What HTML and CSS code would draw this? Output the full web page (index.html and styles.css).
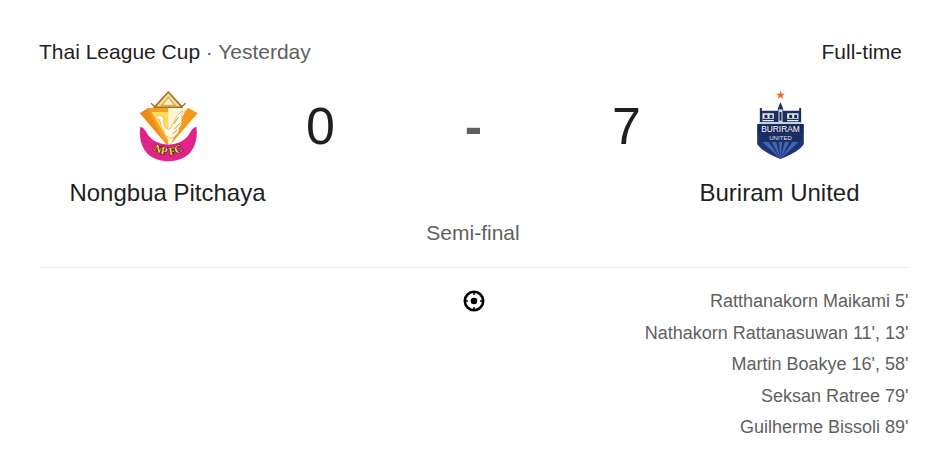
FILE: index.html
```html
<!DOCTYPE html>
<html lang="en">
<head>
<meta charset="utf-8">
<title>Nongbua Pitchaya vs Buriram United</title>
<link rel="stylesheet" href="styles.css">
</head>
<body>
<main class="card">
  <header class="top">
    <div class="league"><span class="league-name">Thai League Cup</span><span class="sep">·</span><span class="when">Yesterday</span></div>
    <div class="status">Full-time</div>
  </header>
  <section class="match">
    <div class="team">
      <svg class="crest" viewBox="0 6 198 216" aria-hidden="true">
        <defs><path id="np-arc" d="M40 176 Q100 226 160 176"/></defs>
        <path d="M100 12 L58 58 L142 58 Z" fill="#f8dfa0" stroke="#a5701f" stroke-width="5" stroke-linejoin="round"/>
        <path d="M100 28 L80 52 L120 52 Z" fill="#fff4d0" stroke="#e2a63c" stroke-width="4"/>
        <path d="M48 46 L62 58 M152 46 L138 58" stroke="#a5701f" stroke-width="4"/>
        <path d="M40 60 L100 60 L100 176 L15 76 Z" fill="#f6a01f"/>
        <path d="M100 60 L160 60 L188 76 L100 176 Z" fill="#fff6da"/>
        <path d="M160 60 L188 76 L108 168 L150 70 Z" fill="#f59a1c"/>
        <path d="M40 60 L15 76 L82 154 L44 74 Z" fill="#ee8a1a"/>
        <path d="M50 72 L100 72 L100 160 Z" fill="#ffdc5a"/>
        <path d="M62 90 C70 76 88 82 86 96 C84 112 92 124 104 124 C114 108 122 84 142 68 C138 92 146 104 132 122 C136 130 122 146 112 150 C100 152 92 146 86 128 C76 116 78 100 72 94 C70 92 66 94 62 90 Z" fill="#fffbe8" stroke="#c88a2a" stroke-width="1.500"/>
        <path d="M116 108 L130 88 M118 124 L134 106 M112 138 L126 126" stroke="#d98a1e" stroke-width="3"/>
        <path d="M16 116 C24 118 30 124 36 136 C46 156 74 170 100 170 C128 170 154 156 164 136 C170 124 176 118 184 116 C190 156 176 192 148 208 C120 224 80 224 52 208 C24 192 10 156 16 116 Z" fill="#e2218a"/>
        <text class="crest-np"><textPath href="#np-arc" startOffset="50%" text-anchor="middle">NP FC</textPath></text>
      </svg>
      <div class="team-name">Nongbua Pitchaya</div>
    </div>
    <div class="center">
      <div class="scores">
        <span class="score">0</span>
        <span class="dash">-</span>
        <span class="score">7</span>
      </div>
      <div class="stage">Semi-final</div>
    </div>
    <div class="team">
      <svg class="crest" viewBox="-10.500 6 198 216" aria-hidden="true">
        <path d="M90 8 L93.500 17 L103 17 L95.500 23 L98 32 L90 27 L82 32 L84.500 23 L77 17 L86.500 17 Z" fill="#f26a21"/>
        <path d="M90 42 L98 62 L98 68 L146 68 L146 60 L152 60 L152 112 L28 112 L28 60 L34 60 L34 68 L82 68 L82 62 Z" fill="#1e2d5c"/>
        <path d="M36 76 H70 V100 H36 Z M110 76 H144 V100 H110 Z" fill="#e9ecf4"/>
        <path d="M42 80 H51 V90 H42 Z M57 80 H66 V90 H57 Z M116 80 H125 V90 H116 Z M131 80 H140 V90 H131 Z M36 92 H70 V96 H36 Z M110 92 H144 V96 H110 Z" fill="#1e2d5c"/>
        <path d="M84 64 H96 V102 H84 Z" fill="#d7dbe8"/>
        <path d="M87 72 H93 V98 H87 Z" fill="#1e2d5c"/>
        <path d="M28 102 H152 V108 H28 Z" fill="#c8cee0"/>
        <path d="M20 108 H160 V168 C146 190 112 204 90 213 C68 204 34 190 20 168 Z" fill="#1b3576"/>
        <path d="M90 213 L36 162 H54 Z M90 213 L64 162 H77 Z M90 213 L85 162 H95 Z M90 213 L103 162 H116 Z M90 213 L126 162 H144 Z" fill="#4466aa"/>
        <path d="M22 110 H158 V136 H22 Z" fill="#16275a"/>
        <path d="M26 139 H154 V160 H26 Z" fill="#1a2c62"/>
        <text class="crest-bu" x="90" y="133" text-anchor="middle" textLength="116" lengthAdjust="spacingAndGlyphs">BURIRAM</text>
        <text class="crest-un" x="90" y="156" text-anchor="middle" textLength="68">UNITED</text>
      </svg>
      <div class="team-name">Buriram United</div>
    </div>
  </section>
  <hr class="rule">
  <section class="goals">
    <div class="goals-side"></div>
    <div class="goal-icon">
      <svg width="22" height="22" viewBox="0 0 22 22" aria-hidden="true">
        <circle cx="11" cy="11" r="9.200" fill="#fff" stroke="#000" stroke-width="2.600"/>
        <circle cx="11" cy="11" r="3.300" fill="#000"/>
        <path d="M11 3 V5 M11 17 V19 M3 11 H5 M17 11 H19" stroke="#000" stroke-width="1.500"/>
      </svg>
    </div>
    <ul class="goals-side scorers">
      <li>Ratthanakorn Maikami 5'</li>
      <li>Nathakorn Rattanasuwan 11', 13'</li>
      <li>Martin Boakye 16', 58'</li>
      <li>Seksan Ratree 79'</li>
      <li>Guilherme Bissoli 89'</li>
    </ul>
  </section>
</main>
</body>
</html>
```

FILE: styles.css
```css
* {
  box-sizing: border-box;
}

html,
body {
  margin: 0;
  padding: 0;
  background: #fff;
}

body {
  font-family: "Liberation Sans", Arial, sans-serif;
  color: #1f1f1f;
  overflow: hidden;
}

.card {
  width: 948px;
  padding: 40px 39px 0;
}

.top {
  display: flex;
  justify-content: space-between;
  align-items: center;
  height: 24px;
  padding-right: 7px;
  font-size: 21px;
  line-height: 24px;
}

.sep {
  margin: 0 5.500px;
  color: #5f5f5f;
}

.when {
  color: #5f5f5f;
}

.match {
  display: grid;
  grid-template-columns: 257px 1fr 259px;
  margin-top: 26px;
}

.team {
  display: flex;
  flex-direction: column;
  align-items: center;
}

.crest {
  display: block;
  width: 66px;
  height: 72px;
}

.crest-np {
  font: bold 32px "Liberation Serif", serif;
  fill: #f8d94a;
  stroke: #2a1a10;
  stroke-width: 3px;
  paint-order: stroke;
  letter-spacing: 1px;
}

.crest-bu {
  font: 26px "Liberation Sans", sans-serif;
  fill: #fff;
}

.crest-un {
  font: 18px "Liberation Sans", sans-serif;
  fill: #dfe4f2;
}

.team-name {
  margin-top: 17px;
  font-size: 24px;
  line-height: 28px;
}

.center {
  display: flex;
  flex-direction: column;
  align-items: center;
}

.scores {
  display: flex;
  justify-content: space-between;
  align-items: center;
  width: 100%;
  height: 72px;
  padding: 0 9px 0 10px;
}

.score {
  font-size: 52px;
  line-height: 72px;
}

.dash {
  font-size: 52px;
  font-weight: bold;
  line-height: 72px;
  color: #5f5f5f;
}

.stage {
  margin-top: 59px;
  font-size: 21px;
  line-height: 24px;
  color: #5f5f5f;
}

.rule {
  height: 1px;
  margin: 22px 0 0;
  border: 0;
  background: #ebebeb;
}

.goals {
  display: grid;
  grid-template-columns: 1fr 40px 1fr;
  margin-top: 18px;
}

.goal-icon {
  display: flex;
  justify-content: center;
  height: 29px;
  align-items: center;
}

.scorers {
  margin: 0;
  padding: 0 0.500px 0 0;
  list-style: none;
  text-align: right;
  font-size: 18px;
  line-height: 31.500px;
  color: #5f5f5f;
}
```
